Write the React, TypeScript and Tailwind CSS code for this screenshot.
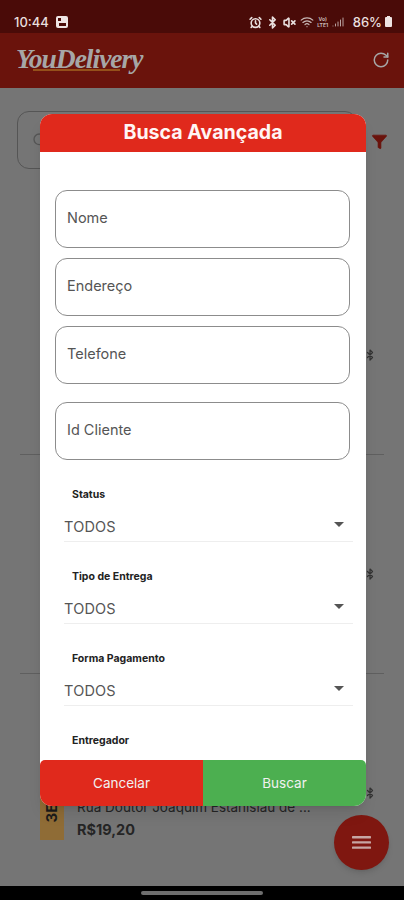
import { AlarmClock, Bluetooth, Filter, RotateCw, Search, Signal, VolumeX, Wifi } from 'lucide-react';

interface FieldProps {
    label: string;
    className: string;
}

function TextField({ label, className }: FieldProps) {
    return (
        <div className={`flex h-[58px] shrink-0 items-center rounded-[12px] border border-[#8c8c8c] pb-[3px] pl-[11px] text-[14.5px] text-[#555555] ${className}`}>
            {label}
        </div>
    );
}

function SelectField({ label, className, empty }: FieldProps & { empty?: boolean }) {
    return (
        <div className={`flex shrink-0 flex-col ${className}`}>
            <div className="h-[16px] pl-[8px] text-[10.5px] leading-[16px] font-bold text-[#222222]">{label}</div>
            {/* the last select is scrolled under the footer, only its label shows */}
            {!empty && (
                <div className="mt-[9px] flex h-[30px] items-center justify-between border-b border-[#eeeeee] pr-[9px] text-[14.5px] tracking-[0.2px] text-[#555555]">
                    <span>TODOS</span>
                    <span className="-mt-[4px] h-0 w-0 border-x-[5px] border-t-[5px] border-x-transparent border-t-[#555555]" />
                </div>
            )}
        </div>
    );
}

function OrderRow({ height, withTag }: { height: string; withTag?: boolean }) {
    return (
        <div className={`relative mx-[20px] border-b border-[#5f5f5f] ${height}`}>
            <div className="absolute top-[113px] right-[8px] text-[#333333]">
                <Bluetooth size={12} strokeWidth={2.5} />
            </div>
            {withTag && (
                <div className="flex pt-[116px] pl-[20px]">
                    <div className="flex h-[50px] w-[24px] flex-col items-center bg-[#8f6c36] pt-[14px]">
                        <span className="-rotate-90 text-[15px] leading-[18px] font-bold whitespace-nowrap text-[#1b1b1b]">3E</span>
                    </div>
                    <div className="mt-[9px] ml-[13px] text-[#252525]">
                        <div className="text-[13.5px] leading-[16px] whitespace-nowrap">Rua Doutor Joaquim Estanislau de ...</div>
                        <div className="mt-[6px] text-[14.5px] leading-[18px] font-bold">R$19,20</div>
                    </div>
                </div>
            )}
        </div>
    );
}

export default function App() {
    return (
        <div className="relative flex h-[900px] w-[404px] flex-col overflow-hidden bg-[#757575] font-['Inter',sans-serif]">
            {/* Status bar */}
            <div className="flex h-[33px] items-end justify-between bg-[#4a0b08] pr-[12px] pb-[3px] pl-[14px] text-[#e9dfde]">
                <div className="flex items-center gap-[7px]">
                    <span className="text-[13px] leading-[16px] font-medium">10:44</span>
                    <span className="relative h-[12px] w-[12px] rounded-[2px] bg-[#eee4e3]">
                        <span className="absolute top-[2px] left-[2px] h-[3px] w-[3px] bg-[#4a0b08]" />
                        <span className="absolute right-[2px] bottom-[2px] h-[3px] w-[7px] bg-[#4a0b08]" />
                    </span>
                </div>
                <div className="flex items-center">
                    <AlarmClock size={13} strokeWidth={3} />
                    <Bluetooth size={13} strokeWidth={3} className="ml-[4px]" />
                    <VolumeX size={13} strokeWidth={3} className="ml-[4px]" />
                    <Wifi size={14} strokeWidth={2} className="ml-[4px] text-[#c9b9b7]" />
                    <span className="ml-[2px] w-[14px] text-center text-[5px] leading-[6px] font-bold text-[#c9b9b7]">Vo) LTE1</span>
                    <Signal size={12} strokeWidth={2} className="ml-[2px] text-[#b9a3a1]" />
                    <span className="ml-[9px] text-[13px] leading-[16px] font-medium">86%</span>
                    <span className="relative ml-[3px] h-[10px] w-[7px] rounded-[1px] bg-[#eee4e3]">
                        <span className="absolute -top-[1px] left-[2px] h-[1px] w-[3px] bg-[#eee4e3]" />
                    </span>
                </div>
            </div>

            {/* App header */}
            <div className="flex h-[55px] items-center justify-between bg-[#6a130c] pr-[14px] pl-[16px] text-[#a6a6a6]">
                <div className="relative -mt-[4px]">
                    <span className="font-['Liberation_Serif',serif] text-[27.5px] leading-[30px] font-bold tracking-[-1px] italic">YouDelivery</span>
                    <span className="absolute top-[25px] left-[17px] h-[2px] w-[87px] bg-[#95501a]" />
                </div>
                <RotateCw size={18} strokeWidth={2} className="-mt-[1px]" />
            </div>

            {/* Page behind the dialog */}
            <div className="flex flex-1 flex-col">
                <div className="flex h-[148px] items-start pt-[23px] pl-[17px]">
                    <div className="flex h-[58px] w-[340px] items-center rounded-[12px] border border-[#555555] pl-[14px] text-[#555555]">
                        <Search size={16} />
                    </div>
                    <Filter size={17} fill="#6a130c" strokeWidth={1} className="mt-[22px] ml-[14px] text-[#6a130c]" />
                </div>
                <OrderRow height="h-[219px]" />
                <OrderRow height="h-[219px]" />
                <OrderRow height="flex-1 border-b-0" withTag />
            </div>

            {/* Navigation bar */}
            <div className="flex h-[14px] items-center justify-center bg-black">
                <div className="-mt-[1px] h-[4px] w-[122px] rounded-full bg-[#6e6e6e]" />
            </div>

            {/* Floating menu button */}
            <div className="absolute top-[815px] left-[334px] flex h-[55px] w-[55px] items-center justify-center rounded-full bg-[#7f1710] shadow-md">
                <svg width="19" height="13" viewBox="0 0 19 13" fill="#c7a6a3">
                    <rect x="0" y="0" width="19" height="2.4" rx="0.6" />
                    <rect x="0" y="5.2" width="19" height="2.4" rx="0.6" />
                    <rect x="0" y="10.4" width="19" height="2.4" rx="0.6" />
                </svg>
            </div>

            {/* Dialog */}
            <div className="absolute top-[114px] left-[40px] flex h-[692px] w-[326px] flex-col overflow-hidden rounded-[12px] bg-white shadow-lg">
                <div className="flex h-[38px] shrink-0 items-center justify-center bg-[#e0291c] text-[19.6px] font-bold text-[#fff5f4]">Busca Avançada</div>
                <div className="flex min-h-0 flex-1 flex-col overflow-hidden px-[15px]">
                    <TextField label="Nome" className="mt-[38px] mr-[1px]" />
                    <TextField label="Endereço" className="mt-[10px] mr-[1px]" />
                    <TextField label="Telefone" className="mt-[10px] mr-[1px]" />
                    <TextField label="Id Cliente" className="mt-[18px] mr-[1px]" />
                    <SelectField label="Status" className="mt-[27px] ml-[9px] -mr-[2px]" />
                    <SelectField label="Tipo de Entrega" className="mt-[27px] ml-[9px] -mr-[2px]" />
                    <SelectField label="Forma Pagamento" className="mt-[27px] ml-[9px] -mr-[2px]" />
                    <SelectField label="Entregador" className="mt-[27px] ml-[9px] -mr-[2px]" empty />
                </div>
                <div className="flex h-[46px] shrink-0 text-[13.5px] text-[#f1f1f1]">
                    <div className="flex flex-1 items-center justify-center rounded-tl-[5px] bg-[#e0291c]">Cancelar</div>
                    <div className="flex flex-1 items-center justify-center rounded-tr-[5px] bg-[#4caf50]">Buscar</div>
                </div>
            </div>
        </div>
    );
}
